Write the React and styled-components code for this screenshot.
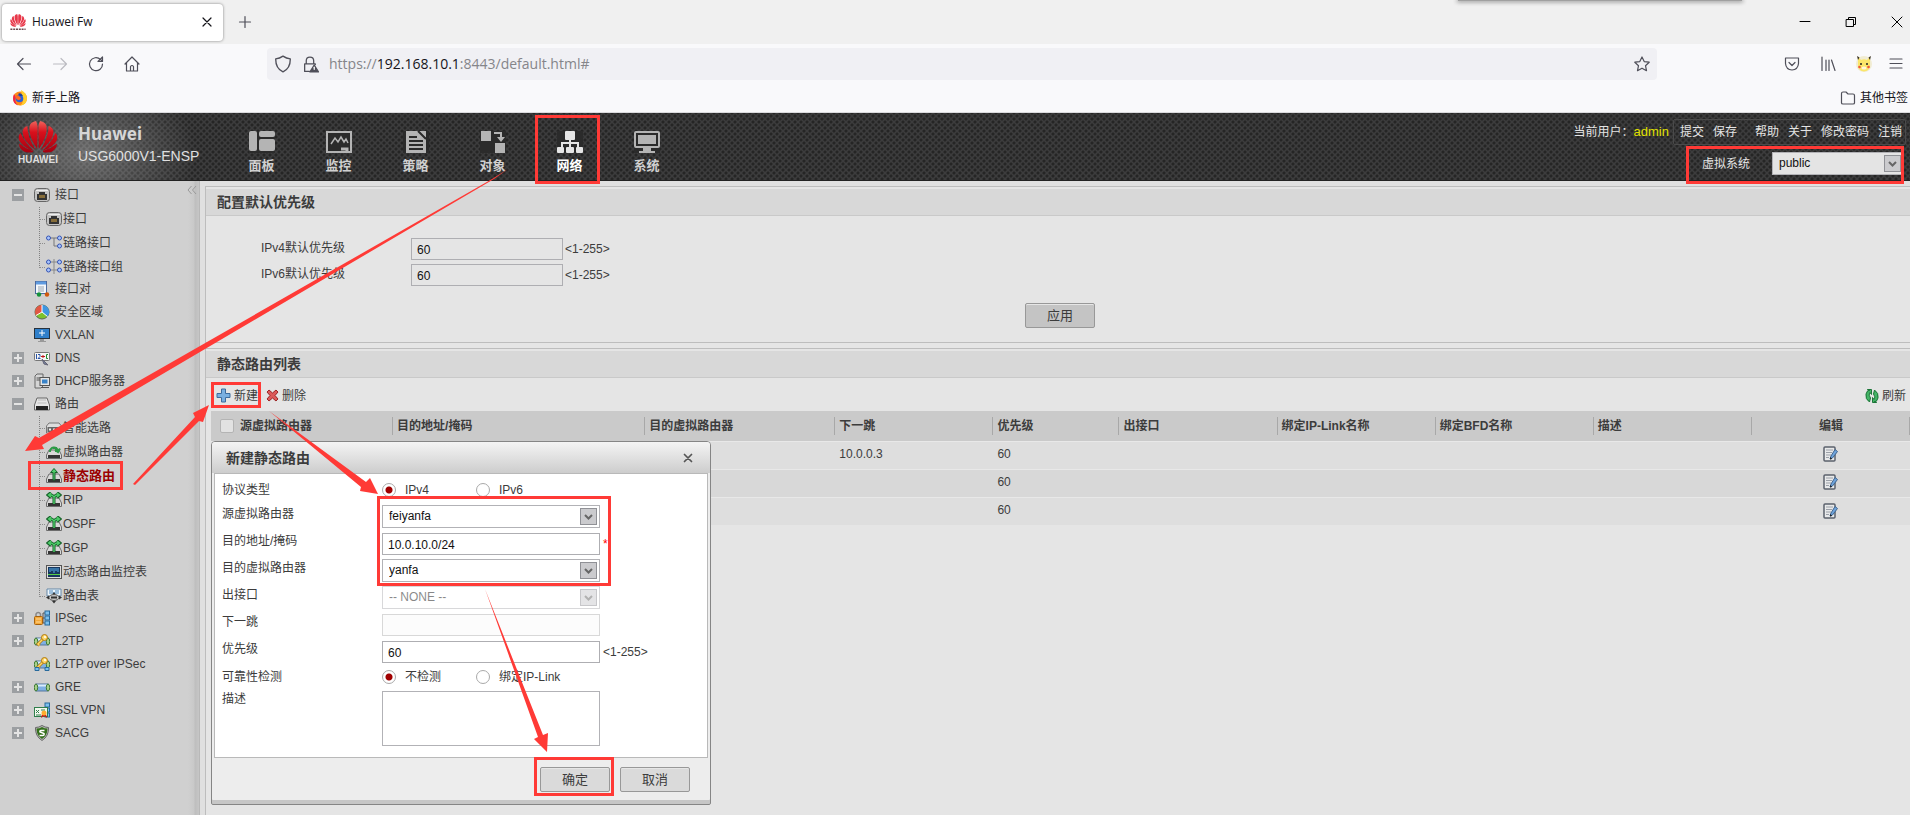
import React from 'react';

import styled, { createGlobalStyle, css } from 'styled-components';

const RED = '#ff3a36';

const GlobalStyle = createGlobalStyle`
  * {
    box-sizing: border-box;
  }
  html, body, #root {
    height: 100%;
  }
  body {
    margin: 0;
    overflow: hidden;
    color: #3c3c3c;
    font: 12px/16px "Liberation Sans", "Noto Sans CJK SC", sans-serif;
  }
  button, input, select, textarea {
    font: inherit;
    color: inherit;
    margin: 0;
  }
  ul {
    list-style: none;
    margin: 0;
    padding: 0;
  }
`;

const Page = styled.div`
  position: relative;
  display: flex;
  flex-direction: column;
  min-height: 100%;
  background: #e0e0e0;
`;

/* browser chrome */

const PlainButton = styled.button`
  display: flex;
  align-items: center;
  justify-content: center;
  padding: 0;
  border: 0;
  background: none;
`;
const TabBar = styled.div`
  display: flex;
  align-items: center;
  height: 44px;
  padding-left: 2px;
  background: #f0f0f0;
`;
const Tab = styled.div`
  display: flex;
  align-items: center;
  gap: 6px;
  width: 221px;
  height: 37px;
  padding: 0 8px;
  border-radius: 4px;
  background: #fff;
  box-shadow: 0 0 3px #808080;
  color: #15141a;
  font-family: "Open Sans", sans-serif;
  span {
    flex: 1;
  }
`;
const NewTab = styled(PlainButton)`
  width: 44px;
`;
const WindowButtons = styled.div`
  display: flex;
  margin-left: auto;
  button {
    width: 46px;
  }
  button:last-child {
    width: 26px;
    margin-left: 10px;
  }
`;
const HiddenBar = styled.div`
  position: absolute;
  top: 0;
  right: 168px;
  width: 284px;
  height: 1px;
  background: #a0a0a0;
  box-shadow: 0 0 4px 1px #888;
`;
const NavBar = styled.div`
  display: flex;
  align-items: center;
  height: 40px;
  padding-left: 6px;
  background: #f9f9fb;
`;
const NavButton = styled(PlainButton)`
  width: 36px;
  height: 32px;
`;
const Address = styled.div`
  display: flex;
  flex: 1;
  align-items: center;
  gap: 10px;
  height: 32px;
  margin: 0 117px;
  padding: 0 7px;
  border-radius: 4px;
  background: #f0f0f4;
`;
const Url = styled.span`
  flex: 1;
  color: #85858a;
  font: 14px/20px "Open Sans", sans-serif;
  b {
    color: #15141a;
    font-weight: 400;
  }
`;
const Extensions = styled.div`
  display: flex;
  button:last-child {
    width: 28px;
  }
`;
const Bookmarks = styled.div`
  display: flex;
  align-items: center;
  justify-content: space-between;
  height: 29px;
  padding: 0 2px 0 12px;
  border-bottom: 1px solid #dadadd;
  background: #f9f9fb;
`;
const Bookmark = styled(PlainButton)`
  gap: 4px;
  color: #15141a;
`;

/* product header */

const Header = styled.header`
  display: flex;
  height: 68px;
  border-bottom: 1px solid #222;
  background:
    radial-gradient(ellipse 110px 80px at 86px 40px, rgba(255, 255, 255, 0.3), transparent),
    radial-gradient(circle, #252525 1px, transparent 2px) 0 0 / 6px 6px,
    radial-gradient(circle, #252525 1px, transparent 2px) 3px 3px / 6px 6px,
    #3c3c3d;
`;
const Brand = styled.div`
  display: flex;
  gap: 20px;
  width: 223px;
  padding: 8px 0 0 18px;
`;
const LogoBox = styled.div`
  display: flex;
  flex-direction: column;
  align-items: center;
  width: 40px;
  color: #ddd;
  font-size: 10px;
  font-weight: 700;
  line-height: 14px;
`;
const Product = styled.div`
  padding-top: 2px;
  color: #e0e0e0;
  font-size: 14px;
  line-height: 22px;
  strong {
    display: block;
    color: #d6d6d6;
    font: 700 17px/22px "Noto Sans", sans-serif;
  }
`;
const MainNav = styled.nav`
  display: flex;
`;
const NavItem = styled.button`
  display: flex;
  flex-direction: column;
  align-items: center;
  gap: 4px;
  width: 77px;
  padding: 18px 0 0;
  border: 0;
  background: none;
  color: ${p => (p.$active ? '#fff' : '#d0d0d0')};
  font-size: 13px;
  font-weight: 700;
  line-height: 18px;
  svg {
    color: ${p => (p.$active ? '#e6e6e6' : '#b4b4b4')};
    background: #2b2b2b;
  }
`;
const HeaderRight = styled.div`
  display: flex;
  flex-direction: column;
  align-items: flex-end;
  gap: 7px;
  margin-left: auto;
  padding: 6px 4px 0 0;
  color: #e4e4e4;
`;
const UserRow = styled.div`
  display: flex;
  align-items: center;
  gap: 4px;
  em {
    color: #e1e100;
    font-size: 13px;
    font-style: normal;
  }
`;
const UserLinks = styled.div`
  display: flex;
  gap: 9px;
  padding: 4px 3px 4px 6px;
  border: 1px solid #4a4a4a;
  border-radius: 2px;
  a {
    color: inherit;
    text-decoration: none;
  }
  a:nth-child(3) {
    margin-left: 9px;
  }
`;
const SystemRow = styled.div`
  display: flex;
  align-items: center;
  gap: 22px;
  padding-right: 2px;
`;

/* form controls */

const SelectBox = styled.div`
  position: relative;
  width: ${p => p.$width}px;
  opacity: ${p => (p.$dim ? 0.5 : 1)};
  svg {
    position: absolute;
    top: 3px;
    right: 3px;
    pointer-events: none;
  }
`;
const SelectField = styled.select`
  display: block;
  width: 100%;
  height: 23px;
  padding: 0 24px 2px 6px;
  appearance: none;
  border: 1px solid #b2b2b6;
  border-radius: 0;
  background: ${p => p.$bg};
  color: #111;
  opacity: 1;
`;
const TextField = styled.input`
  width: ${p => p.$width}px;
  height: 22px;
  padding: 2px 5px 0;
  border: 1px solid ${p => (p.disabled ? '#d8d8d8' : '#aeaeb2')};
  background: ${p => p.$bg || '#fff'};
  color: #111;
`;
const TextArea = styled.textarea`
  display: block;
  width: 218px;
  height: 55px;
  border: 1px solid #b2b2b6;
  resize: none;
`;
const Radio = styled.input`
  width: 14px;
  height: 14px;
  appearance: none;
  border: 1px solid #a9a9a9;
  border-radius: 50%;
  background: #fff;
  &:checked {
    background: radial-gradient(circle, #a00000 3px, #fff 4px);
  }
`;
const RadioLabel = styled.label`
  display: flex;
  align-items: center;
  gap: 9px;
  min-width: 91px;
`;
const Button = styled.button`
  width: 70px;
  height: 25px;
  padding: 0;
  border: 1px solid #989898;
  border-radius: 2px;
  background: ${p => p.$bg};
  box-shadow: inset 0 1px #e6e6e6;
  color: #3c3c3c;
  font-size: 13px;
`;

/* sidebar */

const Body = styled.div`
  display: flex;
  flex: 1;
`;
const Sidebar = styled.aside`
  display: flex;
  justify-content: space-between;
  width: 200px;
  padding-top: 2px;
  border-right: 1px solid #b8b8b8;
  background: linear-gradient(90deg, #d0d0d0 188px, #c9c9c9 194px, #bebebe 195px, #c6c6c6 199px);
`;
const Collapse = styled(PlainButton)`
  width: 12px;
  height: 14px;
  margin-right: 1px;
  color: #9a9a9a;
`;
const TreeRow = styled.div`
  display: flex;
  align-items: center;
  gap: 5px;
  height: 23px;
  padding-left: 12px;
  white-space: nowrap;
`;
const Toggle = styled.button`
  display: flex;
  width: 12px;
  height: 12px;
  margin-right: 5px;
  padding: 0;
  border: 0;
  background: #9c9fa2;
  visibility: ${p => (p.$hidden ? 'hidden' : 'visible')};
`;
const Branch = styled.ul`
  margin-bottom: -2px;
  padding: 1px 0 0 39px;
`;
const Leaf = styled.li`
  display: flex;
  align-items: center;
  gap: 1px;
  height: 24px;
  white-space: nowrap;
  background: repeating-linear-gradient(#808080 0 1px, transparent 1px 2px) 0 0 / 1px ${p => (p.$last ? '50%' : '100%')} no-repeat;
  &::before {
    content: '';
    width: 6px;
    border-top: 1px dotted #8c8c8c;
  }
  ${p => p.$active && css`
    color: #9b0000;
    font-size: 13px;
    font-weight: 700;
  `}
`;

/* content */

const Content = styled.main`
  display: flex;
  flex: 1;
  flex-direction: column;
  min-width: 0;
  margin: 5px 0 0 5px;
  border-left: 1px solid #bdbdbd;
  background: #e5e5e5;
`;
const Panel = styled.section`
  padding-top: 2px;
  border-top: 1px solid #bdbdbd;
`;
const DefaultsPanel = styled(Panel)`
  height: 157px;
  margin-bottom: 5px;
  border-bottom: 1px solid #bdbdbd;
`;
const PanelTitle = styled.h2`
  height: 27px;
  margin: 0;
  padding-left: 11px;
  border-bottom: 1px solid #c9c9c9;
  background: #d8d8d8;
  font-size: 14px;
  line-height: 27px;
`;
const Defaults = styled.div`
  display: grid;
  grid-template-columns: 150px 1fr;
  row-gap: 4px;
  padding: 22px 0 0 55px;
`;
const DefaultsLabel = styled.label`
  line-height: 20px;
`;
const FieldWithHint = styled.div`
  display: flex;
  align-items: center;
  gap: 2px;
`;
const ApplyRow = styled.div`
  display: flex;
  justify-content: center;
  padding: 17px 0 0 4px;
`;
const Toolbar = styled.div`
  display: flex;
  gap: 8px;
  height: 33px;
  padding: 2px 4px 0 10px;
`;
const ToolButton = styled(PlainButton)`
  gap: 3px;
  &:last-child {
    margin-left: auto;
  }
`;
const RouteTable = styled.table`
  width: calc(100% - 5px);
  margin-left: 5px;
  table-layout: fixed;
  border-collapse: collapse;
`;
const Th = styled.th`
  height: 30px;
  padding: 0 4px;
  background: linear-gradient(#a8a8a8, #a8a8a8) right center / 1px 18px no-repeat #cacaca;
  text-align: ${p => p.$align || 'left'};
  vertical-align: middle;
  label {
    display: flex;
    align-items: center;
    gap: 6px;
    padding-left: 5px;
  }
`;
const CheckBox = styled.input`
  width: 14px;
  height: 14px;
  appearance: none;
  border: 1px solid #b4b4b4;
  border-radius: 2px;
  background: #e2e2e2;
`;
const Tr = styled.tr`
  background: ${p => (p.$odd ? '#d8d8d8' : '#dedede')};
  border-top: 1px solid #e8e8e8;
`;
const Td = styled.td`
  height: 28px;
  padding: 0 4px 2px;
  text-align: ${p => p.$align || 'left'};
`;
const EditButton = styled(PlainButton)`
  display: inline-flex;
  vertical-align: middle;
`;

/* dialog */

const Dialog = styled.form`
  position: absolute;
  top: 441px;
  left: 211px;
  width: 500px;
  border: 1px solid #858585;
  border-radius: 4px 4px 2px 2px;
  background: #ededed;
  box-shadow: inset 0 -4px #c6c6c6;
`;
const DialogHead = styled.div`
  display: flex;
  align-items: center;
  justify-content: space-between;
  height: 31px;
  padding: 0 15px 0 14px;
  border-radius: 3px 3px 0 0;
  background: linear-gradient(#f4f4f4, #cdcdcd);
  font-size: 14px;
  font-weight: 700;
`;
const DialogBody = styled.div`
  height: 285px;
  margin: 0 2px;
  padding: 2px 7px 0;
  border: 1px solid #b9b9b9;
  background: #fff;
`;
const FormRow = styled.div`
  display: grid;
  grid-template-columns: 160px 1fr;
  align-items: center;
  height: 27px;
  > :first-child {
    padding-bottom: 6px;
  }
`;
const RadioRow = styled(FormRow)`
  height: ${p => p.$height}px;
  > :first-child {
    padding-bottom: 0;
  }
`;
const TextRow = styled(FormRow)`
  align-items: start;
  padding-top: 3px;
`;
const Field = styled.div`
  display: flex;
  align-items: center;
  gap: 3px;
`;
const Required = styled.span`
  color: #f00;
`;
const DialogFoot = styled.div`
  display: flex;
  justify-content: flex-end;
  gap: 10px;
  padding: 9px 20px 12px 0;
`;

/* annotations drawn over the page */

const Arrows = styled.svg`
  position: absolute;
  top: 0;
  left: 0;
  pointer-events: none;
`;
const Mark = styled.div`
  position: absolute;
  top: ${p => p.$top}px;
  ${p => (p.$right === undefined ? `left: ${p.$left}px;` : `right: ${p.$right}px;`)}
  width: ${p => p.$w}px;
  height: ${p => p.$h}px;
  border: 3px solid ${RED};
  pointer-events: none;
`;

/* icons */

const Line = ({ size = 16, color = '#4f4f59', width = 1.2, children }) => (
  <svg width={size} height={size} viewBox="0 0 16 16" fill="none" stroke={color} strokeWidth={width} strokeLinecap="round" strokeLinejoin="round">
    {children}
  </svg>
);

const HalfFlower = () => (
  <g>
    <path d="M19.200 28Q10 15 11.500 5Q12.500 1 18 0Q20 3 19.600 12Z" />
    <path d="M17.500 29Q5 20 4.500 11Q5 6 9.500 5Q9 15 17.500 29Z" />
    <path d="M16 30Q4 26 1 19Q0 14 2.500 12Q7 22 16 30Z" />
    <path d="M15 31Q7 33 3 28Q1 26 1 22.500Q8 28 15 30Z" />
  </g>
);

const Flower = ({ width, height, fill }) => (
  <svg width={width} height={height} viewBox="0 0 40 32">
    <defs>
      <linearGradient id="petal" x1="0" y1="0" x2="0" y2="32" gradientUnits="userSpaceOnUse">
        <stop offset="0" stopColor="#f0645c" />
        <stop offset="0.35" stopColor="#d8101c" />
        <stop offset="1" stopColor="#a30010" />
      </linearGradient>
    </defs>
    <g fill={fill}>
      <HalfFlower />
      <g transform="translate(40 0) scale(-1 1)">
        <HalfFlower />
      </g>
    </g>
  </svg>
);

const Favicon = () => (
  <svg width="16" height="17" viewBox="0 0 40 42">
    <g fill="#e8384a">
      <HalfFlower />
      <g transform="translate(40 0) scale(-1 1)">
        <HalfFlower />
      </g>
    </g>
    <path d="M1 38H39" stroke="#6d4a50" strokeWidth="4" strokeDasharray="5 2" />
  </svg>
);

const Firefox = () => (
  <svg width="16" height="16" viewBox="0 0 16 16">
    <circle cx="8" cy="8.500" r="7" fill="#ff8a16" />
    <path d="M2 4Q-1 13 6 15.500Q2 12 4 7Z" fill="#f0224b" />
    <path d="M9 0Q15 3 15 9Q14 15 8 15.500Q13 12 10 6Z" fill="#ffcf2e" />
    <circle cx="7.500" cy="8.500" r="3.800" fill="#2b5fd9" />
    <path d="M3 6Q6 4 8 7Q10 9 7 10Q4 10 3 6Z" fill="#ff6a1f" />
    <path d="M6 4Q9 2 11 6L8 6Z" fill="#1a3f9e" />
  </svg>
);

const Pikachu = () => (
  <svg width="18" height="18" viewBox="0 0 18 18">
    <circle cx="9" cy="9" r="8" fill="#f1ecd2" />
    <path d="M3 1.500L6 5Q9 3.500 12 5L15 1.500L15 8Q16 16 9 16.500Q2 16 3 8Z" fill="#fbe66a" />
    <path d="M2 1L4.500 2.500L3 5ZM16 1L13.500 2.500L15 5Z" fill="#3b3324" />
    <circle cx="6" cy="9" r="1" fill="#222" />
    <circle cx="12" cy="9" r="1" fill="#222" />
    <circle cx="4.500" cy="12" r="1.300" fill="#f0583a" />
    <circle cx="13.500" cy="12" r="1.300" fill="#f0583a" />
    <ellipse cx="9" cy="13" rx="2.500" ry="1.500" fill="#fff7dc" />
  </svg>
);

const navIcons = {
  panel: (
    <g fill="currentColor">
      <rect width="8" height="20" rx="2" />
      <rect x="10" width="16" height="6" rx="2" />
      <rect x="10" y="8" width="16" height="12" rx="2" />
    </g>
  ),
  monitor: (
    <g fill="none" stroke="currentColor">
      <path d="M1 1H25V21H1Z" strokeWidth="2" />
      <path d="M5 13L9 7L12 11L15 6L18 11L20 8L22 12" strokeWidth="1.500" />
      <path d="M15 18H21V21" strokeWidth="3" />
    </g>
  ),
  policy: (
    <g>
      <path d="M3 0H16L23 7V22H3Z" fill="currentColor" />
      <path d="M16 0H23V7Z" fill="currentColor" />
      <path d="M15 0L23 8M6 6H14M6 10H20M6 14H20M6 18H20" stroke="#2b2b2b" strokeWidth="2" />
    </g>
  ),
  object: (
    <g fill="currentColor">
      <rect x="1" width="10" height="10" />
      <rect x="15" y="12" width="10" height="10" />
      <path d="M14 1H22V6H25L21 11L17 6H20V3H14Z" />
    </g>
  ),
  network: (
    <g fill="currentColor">
      <rect x="8" width="10" height="9" rx="1" />
      <path d="M12 8H14V11H22V17H20V13H14V17H12V13H6V17H4V11H12Z" />
      <rect y="16" width="7" height="6" rx="1" />
      <rect x="9" y="16" width="8" height="6" rx="1" />
      <rect x="19" y="16" width="7" height="6" rx="1" />
    </g>
  ),
  system: (
    <g fill="currentColor">
      <path fillRule="evenodd" d="M2 0H24Q26 0 26 2V15Q26 17 24 17H2Q0 17 0 15V2Q0 0 2 0ZM2 2V15H24V2Z" />
      <rect x="4" y="4" width="18" height="9" />
      <path d="M9 17H17V20H21V22H5V20H9Z" />
    </g>
  ),
};

const Router = () => (
  <g>
    <path d="M3 6H13L15.500 11V14.500H0.500V11Z" fill="#d8d8d8" stroke="#6c6c6c" />
    <rect x="2" y="11" width="12" height="3" fill="#333" />
  </g>
);
const TwoWay = () => (
  <g>
    <Router />
    <path d="M8 12V4.500M2.500 3Q6 2 8 5Q10 2 13.500 3M5 0.500L2 3L5 5.500M11 0.500L14 3L11 5.500" fill="none" stroke="#17622a" strokeWidth="3" />
    <path d="M8 12V4.500M2.500 3Q6 2 8 5Q10 2 13.500 3M5 1L2.500 3L5 5M11 1L13.500 3L11 5" fill="none" stroke="#4fce6b" strokeWidth="1.300" />
  </g>
);
const Tunnel = () => (
  <g>
    <rect x="2" y="5" width="12" height="7" fill="#7fb0e4" stroke="#54779d" />
    <path d="M3 6.500H13" stroke="#d9ebfb" strokeWidth="2" />
    <ellipse cx="2" cy="8.500" rx="1.700" ry="3.500" fill="#a8d08a" stroke="#3f7a35" />
    <ellipse cx="14" cy="8.500" rx="1.700" ry="3.500" fill="#a8d08a" stroke="#3f7a35" />
  </g>
);
const Key = () => (
  <g>
    <path d="M9 6L4 11L5.500 12.500" fill="none" stroke="#b07a10" strokeWidth="3" />
    <path d="M9 6L4 11L5.500 12.500" fill="none" stroke="#ffd766" strokeWidth="1.500" />
    <circle cx="10.500" cy="4.500" r="3" fill="#ffd766" stroke="#b07a10" />
    <circle cx="11" cy="4" r="1" fill="#fff" />
  </g>
);
const Servers = () => (
  <g fill="#7cc0ee" stroke="#286a9c">
    <rect x="11" y="1" width="4.500" height="4" />
    <rect x="11" y="6" width="4.500" height="4" />
    <rect x="11" y="11" width="4.500" height="4" />
  </g>
);
const Nodes = ({ right }) => (
  <g fill="#a9c4fb" stroke="#3554b4">
    <circle cx="2.500" cy="3" r="2" />
    <circle cx="13.500" cy="3" r="2" />
    <circle cx="13.500" cy="11" r="2" />
    {!right && <circle cx="2.500" cy="11" r="2" />}
  </g>
);

const treeIcons = {
  port: (
    <g>
      <rect x="0.500" y="1.500" width="15" height="13" rx="3" fill="#c4c4c4" stroke="#666" />
      <path d="M2 3.500H14" stroke="#eee" />
      <path d="M3 13V7H5V5H11V7H13V13Z" fill="#333" />
      <path d="M6 8V11M8 8V11M10 8V11" stroke="#d8a640" />
    </g>
  ),
  link: (
    <g>
      <path d="M4 3H12M8 3V11H12" fill="none" stroke="#777" />
      <Nodes right />
    </g>
  ),
  linkGroup: (
    <g>
      <path d="M4 3H12M4 11H12M8 0V15" fill="none" stroke="#888" />
      <Nodes />
    </g>
  ),
  pair: (
    <g>
      <rect x="1.500" y="0.500" width="11" height="12" fill="#f4f8fc" stroke="#4d6a9c" />
      <path d="M2 2H12" stroke="#5f9be0" strokeWidth="3" />
      <path d="M4 6H10M4 8H10M4 10H10" stroke="#9aa5b0" />
      <circle cx="5" cy="13.500" r="2.200" fill="#159238" />
      <circle cx="13" cy="13.500" r="2.200" fill="#d0580c" />
    </g>
  ),
  zone: (
    <g>
      <circle cx="8" cy="8" r="7" fill="#7dc22c" stroke="#5d6a5a" />
      <path d="M8 8V1A7 7 0 0 1 13.500 12.500Z" fill="#3f96e2" />
      <path d="M8 8V1A7 7 0 0 0 2 11.500Z" fill="#e25744" />
      <path d="M8 1V8L13.500 12.500M8 8L2 11.500" fill="none" stroke="#fff" />
    </g>
  ),
  vxlan: (
    <g>
      <rect x="0.500" y="1.500" width="15" height="10" fill="#2f7fca" stroke="#28323c" />
      <path d="M8 3V9M5 6H11" stroke="#fff" />
      <path d="M6 12H10V14H12V15H4V14H6Z" fill="#999" />
    </g>
  ),
  dns: (
    <g>
      <rect x="0.500" y="2.500" width="15" height="8" rx="1" fill="#f5f5f5" stroke="#777" />
      <path d="M2.500 4V9M4 4.500H6V6.500L4 8.500H6.500" fill="none" stroke="#2a55a8" />
      <path d="M7 6.500H11M9 5V8" stroke="#c01818" />
      <path d="M14 4.500H12.500V8.500H14" fill="none" stroke="#1d8a2d" />
      <path d="M8 9L14 15L10 14Z" fill="#75809c" stroke="#667" />
    </g>
  ),
  dhcp: (
    <g>
      <path d="M1 3L3 1H9V13L7 15H1Z" fill="#d5d5d5" stroke="#666" />
      <path d="M2.500 5H6M2.500 7H6" stroke="#555" />
      <rect x="6" y="4.500" width="9.500" height="8" fill="#e5e5e5" stroke="#555" />
      <rect x="8" y="6.500" width="5.500" height="4" fill="#3a83c8" />
      <path d="M7 14.500H15" stroke="#555" />
    </g>
  ),
  route: (
    <g>
      <path d="M3 2H13L15.500 9V14H0.500V9Z" fill="#e6e6e6" stroke="#666" />
      <rect x="2" y="10" width="12" height="4" fill="#222" />
      <path d="M4 4H12M3.500 7H12.500" stroke="#bbb" />
    </g>
  ),
  smart: (
    <g>
      <path d="M3 3H13L15.500 6V13H0.500V6Z" fill="#ddd" stroke="#777" />
      <rect x="1.500" y="7" width="13" height="5" fill="#666" />
      <path d="M3 9.500H5M7 9.500H9M11 9.500H13" stroke="#eee" strokeWidth="2" />
    </g>
  ),
  virtual: (
    <g>
      <Router />
      <path d="M4 8A4 4 0 1 1 12 7M14 4.500L12 8L9 6M7 4H10V8" fill="none" stroke="#2d9a46" strokeWidth="2" />
    </g>
  ),
  staticRoute: (
    <g>
      <Router />
      <path d="M8 0.500L11.500 4.500H9V12H7V4.500H4.500Z" fill="#4fce6b" stroke="#17622a" />
    </g>
  ),
  twoWay: <TwoWay />,
  table: (
    <g>
      <rect x="0.500" y="1.500" width="15" height="13" fill="#ddd" stroke="#555" />
      <rect x="2" y="3" width="12" height="10" fill="#17375f" />
      <path d="M4 4V8M6 4V7M8 4V9M10 4V7M12 4V8" stroke="#59b3f0" />
      <path d="M2 10.500H14" stroke="#58cf48" />
    </g>
  ),
  routeTable: (
    <g>
      <path d="M1 1H15V8H1Z" fill="#eef6fc" stroke="#6689a8" />
      <path d="M3 3H7M9 3H13M3 5H13" stroke="#4b88be" />
      <ellipse cx="8" cy="9.500" rx="5" ry="3" fill="#c8c8c8" stroke="#555" />
      <path d="M5 9.500H11" stroke="#333" strokeWidth="2" />
      <path d="M0 9.500L3 7.500V11.500ZM16 9.500L13 7.500V11.500ZM8 15.500L6 13H10ZM8 4L6.500 6H9.500Z" fill="#333" />
    </g>
  ),
  ipsec: (
    <g>
      <path d="M9 8H11M9 3V13M9 3H11M9 13H11" stroke="#555" fill="none" />
      <Servers />
      <path d="M2 7V4A2.500 2.500 0 0 1 6.500 4V7" fill="none" stroke="#888" strokeWidth="1.500" />
      <rect x="0.500" y="6.500" width="8" height="8" rx="1" fill="#f4a93c" stroke="#a8620c" />
      <path d="M2 9H7M2 12H7" stroke="#ffd894" />
    </g>
  ),
  l2tp: (
    <g>
      <Tunnel />
      <Key />
    </g>
  ),
  l2tpIpsec: (
    <g>
      <Tunnel />
      <Key />
      <path d="M1 11.500H5V14.500H1ZM11 11.500H15V14.500H11Z" fill="#7cc0ee" stroke="#286a9c" />
    </g>
  ),
  gre: <Tunnel />,
  ssl: (
    <g>
      <Servers />
      <rect x="0.500" y="5.500" width="13" height="9" fill="#f3f8ee" stroke="#2f7f4c" />
      <path d="M2 8L5 11M5 8L2 11M7 8H11M2 13H7" stroke="#2f7f4c" />
      <path d="M8 12L7 16L10 14L13 16L12 12Z" fill="#d01818" />
      <circle cx="10" cy="11" r="2.500" fill="#ffad2e" />
    </g>
  ),
  sacg: (
    <g>
      <path d="M8 0.500Q11 2.500 14.500 2.500Q15 11 8 15.500Q1 11 1.500 2.500Q5 2.500 8 0.500Z" fill="#bdbdbd" stroke="#666" />
      <path d="M8 2Q10.500 3.500 13.500 3.500Q13.500 10.500 8 14Q2.500 10.500 2.500 3.500Q5.500 3.500 8 2Z" fill="#35701c" />
      <path d="M10.500 5.500H7Q5.500 5.500 6 7L10 8.500Q10.500 10.500 8.500 10.500H5.500" fill="none" stroke="#fff" strokeWidth="1.500" />
    </g>
  ),
};

const TreeIcon = ({ name }) => (
  <svg width="16" height="16" viewBox="0 0 16 16">{treeIcons[name]}</svg>
);

const DropArrow = () => (
  <svg width="17" height="17" viewBox="0 0 17 17">
    <rect x="0.500" y="0.500" width="16" height="16" fill="#cbcbce" stroke="#909196" />
    <path d="M5 7L8.500 10.500L12 7" fill="none" stroke="#666" strokeWidth="2" />
  </svg>
);

const EditIcon = () => (
  <svg width="16" height="16" viewBox="0 0 16 16">
    <rect x="1" y="1" width="11" height="14" rx="1" fill="#e8e9ea" stroke="#5b616c" strokeWidth="1.500" />
    <path d="M3 4H10M3 6.500H9M3 9H8M3 11.500H6" stroke="#9ba0a8" />
    <path d="M12 3.500L14.500 5.500L9.500 12L7 13L8 10Z" fill="#6fa4dc" stroke="#40658f" />
    <path d="M7.500 11L9 13L7 13.500Z" fill="#111" />
  </svg>
);

/* data */

const nav = [
  ['面板', 'panel'],
  ['监控', 'monitor'],
  ['策略', 'policy'],
  ['对象', 'object'],
  ['网络', 'network'],
  ['系统', 'system'],
];

const tree = [
  {
    name: '接口',
    icon: 'port',
    open: true,
    children: [['接口', 'port'], ['链路接口', 'link'], ['链路接口组', 'linkGroup']],
  },
  { name: '接口对', icon: 'pair', leaf: true },
  { name: '安全区域', icon: 'zone', leaf: true },
  { name: 'VXLAN', icon: 'vxlan', leaf: true },
  { name: 'DNS', icon: 'dns' },
  { name: 'DHCP服务器', icon: 'dhcp' },
  {
    name: '路由',
    icon: 'route',
    open: true,
    children: [
      ['智能选路', 'smart'],
      ['虚拟路由器', 'virtual'],
      ['静态路由', 'staticRoute'],
      ['RIP', 'twoWay'],
      ['OSPF', 'twoWay'],
      ['BGP', 'twoWay'],
      ['动态路由监控表', 'table'],
      ['路由表', 'routeTable'],
    ],
  },
  { name: 'IPSec', icon: 'ipsec' },
  { name: 'L2TP', icon: 'l2tp' },
  { name: 'L2TP over IPSec', icon: 'l2tpIpsec', leaf: true },
  { name: 'GRE', icon: 'gre' },
  { name: 'SSL VPN', icon: 'ssl' },
  { name: 'SACG', icon: 'sacg' },
];

const columns = [
  ['源虚拟路由器', 182],
  ['目的地址/掩码', 252],
  ['目的虚拟路由器', 190],
  ['下一跳', 158],
  ['优先级', 126],
  ['出接口', 158],
  ['绑定IP-Link名称', 158],
  ['绑定BFD名称', 158],
  ['描述', 158],
  ['编辑', 158],
];

const routes = [
  { nextHop: '10.0.0.3', priority: 60 },
  { nextHop: '', priority: 60 },
  { nextHop: '', priority: 60 },
];

const Select = ({ id, value, width = 218, bg = '#fff', disabled }) => (
  <SelectBox $width={width} $dim={disabled}>
    <SelectField id={id} $bg={bg} defaultValue={value} disabled={disabled}>
      <option>{value}</option>
    </SelectField>
    <DropArrow />
  </SelectBox>
);

const Browser = () => (
  <>
    <TabBar>
      <Tab>
        <Favicon />
        <span>Huawei Fw</span>
        <PlainButton aria-label="Close tab">
          <Line color="#15141a"><path d="M4 4L12 12M12 4L4 12" /></Line>
        </PlainButton>
      </Tab>
      <NewTab aria-label="New tab">
        <Line><path d="M8 2.500V13.500M2.500 8H13.500" /></Line>
      </NewTab>
      <WindowButtons>
        <PlainButton aria-label="Minimize"><Line color="#000" width={1}><path d="M3 7.500H13" /></Line></PlainButton>
        <PlainButton aria-label="Restore">
          <Line color="#000" width={1}><path d="M3.500 5.500H10.500V12.500H3.500ZM5.500 5V3.500H12.500V10.500H11" /></Line>
        </PlainButton>
        <PlainButton aria-label="Close"><Line color="#000" width={1}><path d="M3 3L13 13M13 3L3 13" /></Line></PlainButton>
      </WindowButtons>
      <HiddenBar />
    </TabBar>
    <NavBar>
      <NavButton aria-label="Back"><Line><path d="M14.500 8H1.500M7 2.500L1.500 8L7 13.500" /></Line></NavButton>
      <NavButton aria-label="Forward"><Line color="#bcbcc2"><path d="M1.500 8H14.500M9 2.500L14.500 8L9 13.500" /></Line></NavButton>
      <NavButton aria-label="Reload"><Line><path d="M14.500 8A6.500 6.500 0 1 1 12.500 3.500L14 5M14.500 1V5.500H10Z" /></Line></NavButton>
      <NavButton aria-label="Home"><Line><path d="M1 8L8 1L15 8M2.500 7V15H13.500V7M6.500 15V10.500Q8 8.500 9.500 10.500V15" /></Line></NavButton>
      <Address>
        <Line size={18}><path d="M8 1Q11 3 14.500 3.500Q14.500 12 8 15Q1.500 12 1.500 3.500Q5 3 8 1Z" /></Line>
        <Line size={17}>
          <path d="M7 14.500H2.500V7.500H12.500V8M4 7V4.500Q4 1 7.500 1Q11 1 11 4.500V7" />
          <path d="M11.500 8.500L15.500 15H7.500Z" fill="#4f4f59" />
          <path d="M11.500 10.500V12.500" stroke="#fff" />
        </Line>
        <Url>https://<b>192.168.10.1</b>:8443/default.html#</Url>
        <Line><path d="M8 1L10.200 5.600L15.200 6.200L11.500 9.700L12.500 14.700L8 12.200L3.500 14.700L4.500 9.700L0.800 6.200L5.800 5.600Z" /></Line>
      </Address>
      <Extensions>
        <NavButton aria-label="Pocket"><Line><path d="M1.500 2H14.500V7.500Q14 13.500 8 14Q2 13.500 1.500 7.500ZM5 6.500L8 9.500L11 6.500" /></Line></NavButton>
        <NavButton aria-label="Library"><Line><path d="M2 1V14.500M6 4V14.500M9 4V14.500M11.500 4L15 14.500" /></Line></NavButton>
        <NavButton aria-label="Account"><Pikachu /></NavButton>
        <NavButton aria-label="Menu"><Line><path d="M2 3H14M2 7.500H14M2 12H14" /></Line></NavButton>
      </Extensions>
    </NavBar>
    <Bookmarks>
      <Bookmark><Firefox />新手上路</Bookmark>
      <Bookmark><Line><path d="M1.500 13V3.500Q1.500 2 3 2H6L8 4H13Q14.500 4 14.500 5.500V13Q14.500 14 13 14H3Q1.500 14 1.500 13Z" /></Line>其他书签</Bookmark>
    </Bookmarks>
  </>
);

const TopHeader = () => (
  <Header>
    <Brand>
      <LogoBox>
        <Flower width={40} height={32} fill="url(#petal)" />
        HUAWEI
      </LogoBox>
      <Product>
        <strong>Huawei</strong>
        USG6000V1-ENSP
      </Product>
    </Brand>
    <MainNav>
      {nav.map(([label, icon]) => (
        <NavItem key={label} $active={icon === 'network'}>
          <svg width="26" height="22" viewBox="0 0 26 22">{navIcons[icon]}</svg>
          {label}
        </NavItem>
      ))}
    </MainNav>
    <HeaderRight>
      <UserRow>
        <span>当前用户：<em>admin</em></span>
        <UserLinks>
          <a href="#commit">提交</a>
          <a href="#save">保存</a>
          <a href="#help">帮助</a>
          <a href="#about">关于</a>
          <a href="#password">修改密码</a>
          <a href="#logout">注销</a>
        </UserLinks>
      </UserRow>
      <SystemRow>
        <label htmlFor="vsys">虚拟系统</label>
        <Select id="vsys" value="public" width={132} bg="#e4e4e4" />
      </SystemRow>
    </HeaderRight>
  </Header>
);

const Tree = () => (
  <Sidebar>
    <ul>
      {tree.map(node => (
        <li key={node.name}>
          <TreeRow>
            <Toggle $hidden={node.leaf} aria-label={node.name}>
              <svg width="12" height="12" viewBox="0 0 12 12" stroke="#e4e4e4" strokeWidth="2">
                <path d={node.open ? 'M2 6H10' : 'M2 6H10M6 2V10'} />
              </svg>
            </Toggle>
            <TreeIcon name={node.icon} />
            {node.name}
          </TreeRow>
          {node.children && (
            <Branch>
              {node.children.map(([name, icon], i) => (
                <Leaf key={name} $active={icon === 'staticRoute'} $last={i === node.children.length - 1}>
                  <TreeIcon name={icon} />
                  {name}
                </Leaf>
              ))}
            </Branch>
          )}
        </li>
      ))}
    </ul>
    <Collapse aria-label="Collapse">
      <svg width="10" height="10" viewBox="0 0 10 10" fill="none" stroke="currentColor">
        <path d="M4.500 1L1 5L4.500 9M9 1L5.500 5L9 9" />
      </svg>
    </Collapse>
  </Sidebar>
);

const RouteList = () => (
  <Panel>
    <PanelTitle>静态路由列表</PanelTitle>
    <Toolbar>
      <ToolButton>
        <svg width="15" height="15" viewBox="0 0 15 15">
          <path d="M5.500 1H9.500V5.500H14V9.500H9.500V14H5.500V9.500H1V5.500H5.500Z" fill="#79afe0" stroke="#3d6c9e" />
        </svg>
        新建
      </ToolButton>
      <ToolButton>
        <svg width="13" height="13" viewBox="0 0 13 13">
          <path d="M3 1L6.500 4L10 1L12 3L9 6.500L12 10L10 12L6.500 9L3 12L1 10L4 6.500L1 3Z" fill="#dc5a5a" stroke="#9c2626" />
        </svg>
        删除
      </ToolButton>
      <ToolButton>
        <svg width="14" height="14" viewBox="0 0 14 14">
          <path d="M4.500 13Q0 10 1 5Q2 1 5 1H2.500V0.500H6.500V5.500L5 3.500Q3 6 5.500 9Z" fill="#43b466" stroke="#1c7538" />
          <path d="M9.500 1Q14 4 13 9Q12 13 9 13H11.500V13.500H7.500V8.500L9 10.500Q11 8 8.500 5Z" fill="#43b466" stroke="#1c7538" />
        </svg>
        刷新
      </ToolButton>
    </Toolbar>
    <RouteTable>
      <colgroup>
        {columns.map(([name, width]) => <col key={name} width={width} />)}
      </colgroup>
      <thead>
        <tr>
          {columns.map(([name], i) => (
            <Th key={name} $align={name === '编辑' ? 'center' : 'left'}>
              {i === 0 ? <label><CheckBox type="checkbox" />{name}</label> : name}
            </Th>
          ))}
        </tr>
      </thead>
      <tbody>
        {routes.map((route, i) => (
          <Tr key={i} $odd={i % 2 === 1}>
            <Td />
            <Td />
            <Td />
            <Td>{route.nextHop}</Td>
            <Td>{route.priority}</Td>
            <Td />
            <Td />
            <Td />
            <Td />
            <Td $align="center"><EditButton aria-label="编辑"><EditIcon /></EditButton></Td>
          </Tr>
        ))}
      </tbody>
    </RouteTable>
  </Panel>
);

const NewRoute = () => (
  <Dialog onSubmit={e => e.preventDefault()}>
    <DialogHead>
      新建静态路由
      <PlainButton type="button" aria-label="关闭">
        <Line size={14} color="#555" width={2}><path d="M4 4L12 12M12 4L4 12" /></Line>
      </PlainButton>
    </DialogHead>
    <DialogBody>
      <RadioRow $height={27}>
        <span>协议类型</span>
        <Field>
          <RadioLabel><Radio type="radio" name="proto" defaultChecked />IPv4</RadioLabel>
          <RadioLabel><Radio type="radio" name="proto" />IPv6</RadioLabel>
        </Field>
      </RadioRow>
      <FormRow>
        <label htmlFor="src">源虚拟路由器</label>
        <Select id="src" value="feiyanfa" />
      </FormRow>
      <FormRow>
        <label htmlFor="dst">目的地址/掩码</label>
        <Field>
          <TextField id="dst" $width={218} defaultValue="10.0.10.0/24" />
          <Required>*</Required>
        </Field>
      </FormRow>
      <FormRow>
        <label htmlFor="dstvr">目的虚拟路由器</label>
        <Select id="dstvr" value="yanfa" />
      </FormRow>
      <FormRow>
        <label htmlFor="out">出接口</label>
        <Select id="out" value="-- NONE --" disabled />
      </FormRow>
      <FormRow>
        <label htmlFor="hop">下一跳</label>
        <TextField id="hop" $width={218} $bg="#fcfcfc" disabled />
      </FormRow>
      <FormRow>
        <label htmlFor="prio">优先级</label>
        <Field>
          <TextField id="prio" $width={218} defaultValue="60" />
          &lt;1-255&gt;
        </Field>
      </FormRow>
      <RadioRow $height={23}>
        <span>可靠性检测</span>
        <Field>
          <RadioLabel><Radio type="radio" name="detect" defaultChecked />不检测</RadioLabel>
          <RadioLabel><Radio type="radio" name="detect" />绑定IP-Link</RadioLabel>
        </Field>
      </RadioRow>
      <TextRow>
        <label htmlFor="desc">描述</label>
        <TextArea id="desc" />
      </TextRow>
    </DialogBody>
    <DialogFoot>
      <Button $bg="#dadada">确定</Button>
      <Button type="button" $bg="#dadada">取消</Button>
    </DialogFoot>
  </Dialog>
);

const Annotations = () => (
  <>
    <Mark $top={115} $left={535} $w={65} $h={69} />
    <Mark $top={146} $right={6} $w={218} $h={38} />
    <Mark $top={382} $left={211} $w={50} $h={26} />
    <Mark $top={461} $left={28} $w={95} $h={29} />
    <Mark $top={496} $left={377} $w={234} $h={90} />
    <Mark $top={757} $left={534} $w={80} $h={39} />
    <Arrows width="720" height="815" viewBox="0 0 720 815" fill={RED}>
      <polygon points="508,169 492,179 39,438 35,436 25,451 44,449 42,445 494,179" />
      <polygon points="133,484 195,417 193,413 209,405 203,422 199,421 135,485" />
      <polygon points="269,411 366,482 370,478 378,494 360,491 361,487" />
      <polygon points="485,589 543,735 548,733 547,752 534,739 538,737" />
    </Arrows>
  </>
);

const App = () => (
  <Page>
    <GlobalStyle />
    <Browser />
    <TopHeader />
    <Body>
      <Tree />
      <Content>
        <DefaultsPanel>
          <PanelTitle>配置默认优先级</PanelTitle>
          <Defaults>
            <DefaultsLabel htmlFor="v4">IPv4默认优先级</DefaultsLabel>
            <FieldWithHint>
              <TextField id="v4" $width={152} $bg="#e5e5e5" defaultValue="60" />
              &lt;1-255&gt;
            </FieldWithHint>
            <DefaultsLabel htmlFor="v6">IPv6默认优先级</DefaultsLabel>
            <FieldWithHint>
              <TextField id="v6" $width={152} $bg="#e5e5e5" defaultValue="60" />
              &lt;1-255&gt;
            </FieldWithHint>
          </Defaults>
          <ApplyRow>
            <Button $bg="#c4c4c4">应用</Button>
          </ApplyRow>
        </DefaultsPanel>
        <RouteList />
      </Content>
    </Body>
    <NewRoute />
    <Annotations />
  </Page>
);

export default App;
